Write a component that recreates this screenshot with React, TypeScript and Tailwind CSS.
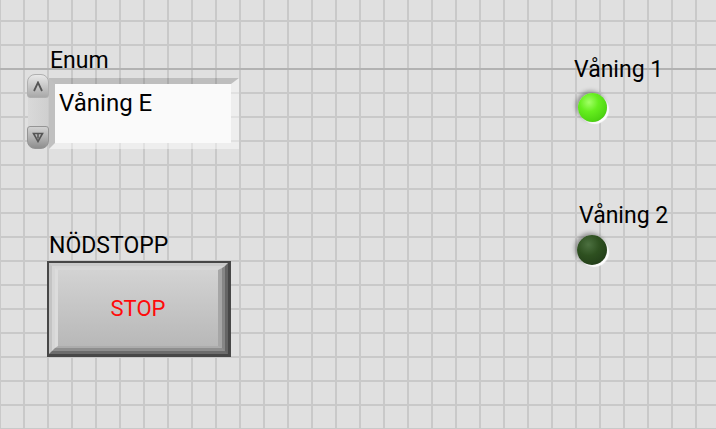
import React from "react"

function Label({ text, className = "" }: { text: string; className?: string }) {
  return (
    <div
      className={`h-[27px] text-[23px] leading-[27px] whitespace-nowrap text-black font-[Roboto,sans-serif] ${className}`}
    >
      {text}
    </div>
  )
}

function EnumControl() {
  return (
    <div className="flex h-[75px] items-start">
      {/* spinner */}
      <div className="flex h-[75px] w-[22px] flex-col">
        <div className="flex h-[24px] items-center justify-center rounded-t-[8px] rounded-b-[3px] border border-[#b0b0b0] bg-gradient-to-b from-[#e8e8e8] via-[#c8c8c8] to-[#a9a9a9]">
          <svg width="12" height="11" viewBox="0 0 12 11">
            <path d="M2 10 L6 1.5 L10 10" fill="none" stroke="#555" strokeWidth="1.8" />
          </svg>
        </div>
        <div className="mx-[1px] h-[28px] bg-gradient-to-r from-[#d9d9d9] to-[#cfcfcf]" />
        <div className="flex h-[23px] items-center justify-center rounded-b-[8px] rounded-t-[3px] border border-[#959595] bg-gradient-to-b from-[#d2d2d2] via-[#b2b2b2] to-[#8e8e8e]">
          <svg width="12" height="11" viewBox="0 0 12 11">
            <path d="M1.5 1.5 L10.5 1.5 L6 9.5 Z" fill="none" stroke="#555" strokeWidth="1.6" />
            <path d="M6 1.5 L6 6.5" stroke="#555" strokeWidth="1.5" />
          </svg>
        </div>
      </div>
      {/* display */}
      <div className="mt-[4px] h-[71px] w-[190px] border-t-[6px] border-l-[6px] border-r-[8px] border-b-[6px] border-t-black/15 border-l-[#c0c0c0] border-r-white/45 border-b-white/45">
        <div className="h-full bg-[#fafafa] pl-[4px] pt-[5px] text-[24px] leading-[28px] text-black font-[Roboto,sans-serif] whitespace-nowrap">
          Våning E
        </div>
      </div>
    </div>
  )
}

function StopButton() {
  return (
    <div className="h-[96px] w-[184px] border-l-2 border-t-2 border-r-[3px] border-b-[3px] border-[#474747]">
      <div className="h-full border-l-[3px] border-t-[3px] border-r-[3px] border-b-[3px] border-l-[#c4c4c4] border-t-[#cbcbcb] border-r-[#656565] border-b-[#6c6c6c]">
        <div className="h-full border-l-[3px] border-t-[2px] border-r-[3px] border-b-[3px] border-l-[#d6d6d6] border-t-[#d6d6d6] border-r-[#868686] border-b-[#8e8e8e]">
          <div className="h-full border-l-[3px] border-t-[2px] border-r-[4px] border-b-[2px] border-l-[#dcdcdc] border-t-[#d8d8d8] border-r-[#a6a6a6] border-b-[#acacac]">
            <div className="flex h-full items-center justify-center bg-gradient-to-b from-[#d3d3d3] to-[#b8b8b8] pt-[1px] text-[22px] text-[#ff0a0a] font-[Roboto,sans-serif]">
              STOP
            </div>
          </div>
        </div>
      </div>
    </div>
  )
}

function Led({ on, size, className = "" }: { on: boolean; size: string; className?: string }) {
  return (
    <div
      className={`rounded-full shadow-[-2px_-2px_4px_rgba(0,0,0,0.35),2px_2px_1px_#ffffff] ${size} ${
        on
          ? "bg-[radial-gradient(circle_at_38%_32%,#a2ff66_0%,#66ee1e_35%,#4fd612_70%,#36a80a_100%)]"
          : "bg-[radial-gradient(circle_at_38%_32%,#4c7040_0%,#2e5020_40%,#24401a_75%,#142810_100%)]"
      } ${className}`}
    />
  )
}

export default function App() {
  return (
    <div className="flex h-[429px] w-[716px] overflow-hidden bg-[#e0e0e0] [background-image:linear-gradient(#b2b2b2,#b2b2b2),linear-gradient(to_right,#c9c9c9_2px,transparent_2px),linear-gradient(to_bottom,#c9c9c9_2px,transparent_2px)] [background-size:100%_2px,24px_24px,24px_24px] [background-position:0_68px,23px_20px,23px_20px] [background-repeat:repeat-x,repeat,repeat]">
      <div className="flex w-[574px] flex-col pl-[27px] pt-[47px]">
        <Label text="Enum" className="ml-[23px] h-[26px]" />
        <EnumControl />
        <Label text="NÖDSTOPP" className="ml-[22px] mt-[83px]" />
        <div className="ml-[20px] mt-[2px]">
          <StopButton />
        </div>
      </div>
      <div className="flex flex-col pt-[56px]">
        <Label text="Våning 1" />
        <Led on size="h-[29px] w-[29px]" className="ml-[4px] mt-[10px]" />
        <Label text="Våning 2" className="ml-[5px] mt-[80px]" />
        <Led on={false} size="h-[30px] w-[30px]" className="ml-[3px] mt-[6px]" />
      </div>
    </div>
  )
}
